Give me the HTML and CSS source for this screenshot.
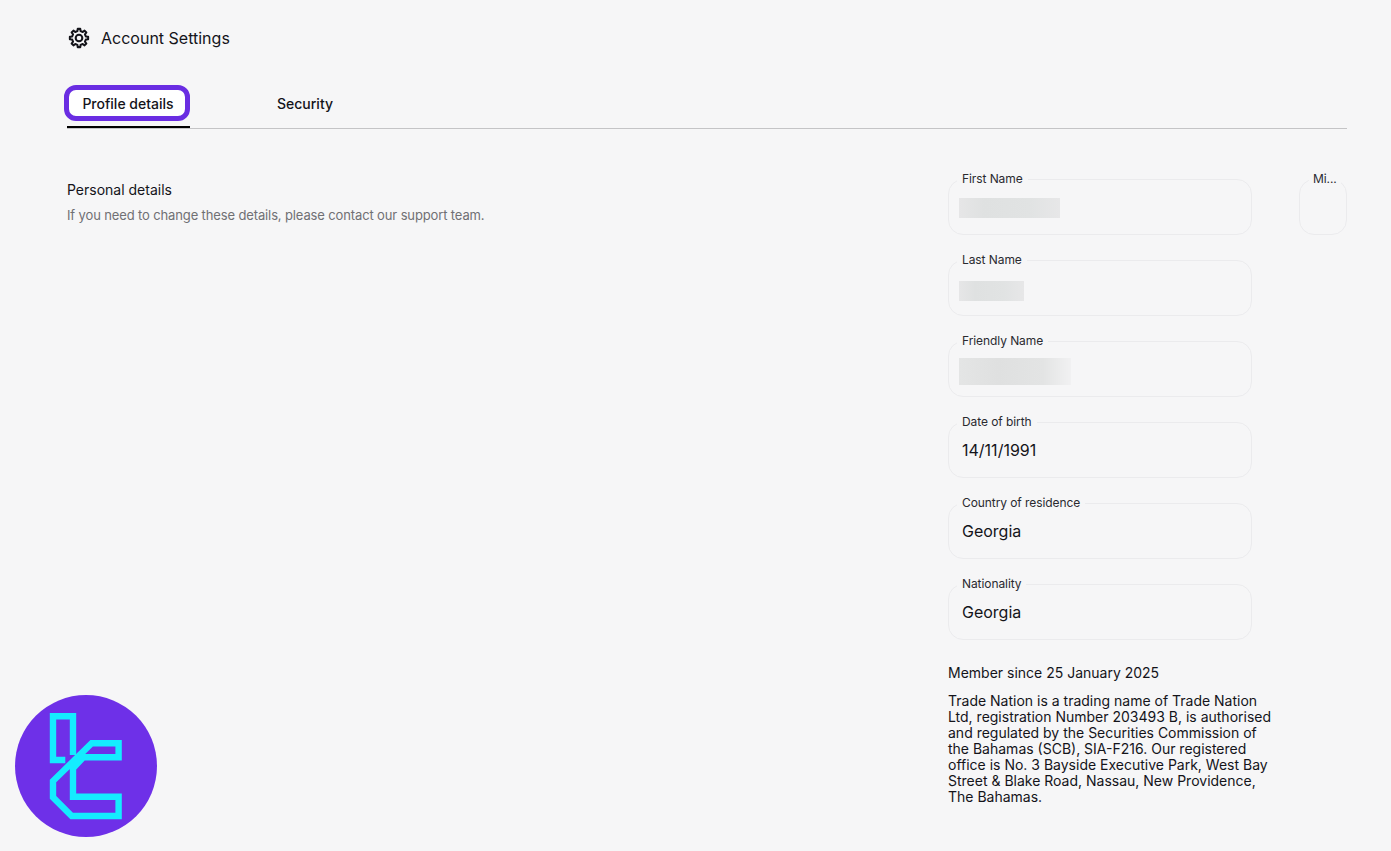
FILE: index.html
```html
<!DOCTYPE html>
<html lang="en">
<head>
<meta charset="utf-8">
<title>Account Settings</title>
<link rel="stylesheet" href="styles.css">
</head>
<body>
<main class="page">
  <header class="title-row">
    <svg class="gear" viewBox="-1 -1 26 26" width="24" height="24" fill="none" stroke="#14141a" stroke-width="2.2" stroke-linejoin="round">
      <path d="M10.61 2.1L13.39 2.1L13.71 4.6L16.03 5.56L18.02 4.01L19.99 5.98L18.44 7.97L19.4 10.29L21.9 10.61L21.9 13.39L19.4 13.71L18.44 16.03L19.99 18.02L18.02 19.99L16.03 18.44L13.71 19.4L13.39 21.9L10.61 21.9L10.29 19.4L7.97 18.44L5.98 19.99L4.01 18.02L5.56 16.03L4.6 13.71L2.1 13.39L2.1 10.61L4.6 10.29L5.56 7.97L4.01 5.98L5.98 4.01L7.97 5.56L10.29 4.6Z"/>
      <circle cx="12" cy="12" r="3.6"/>
    </svg>
    <h1 class="title">Account Settings</h1>
  </header>

  <nav class="tabs">
    <div class="tab-item">
      <button class="tab-pill" type="button">Profile details</button>
    </div>
    <button class="tab" type="button">Security</button>
  </nav>

  <section class="content">
    <div class="intro">
      <h2 class="intro-title">Personal details</h2>
      <p class="intro-text">If you need to change these details, please contact our support team.</p>
    </div>

    <div class="details">
      <div class="field-row">
        <fieldset class="field">
          <legend class="field-label">First Name</legend>
          <div class="redacted redacted-first"></div>
        </fieldset>
        <fieldset class="field field-small">
          <legend class="field-label">Mi...</legend>
        </fieldset>
      </div>
      <fieldset class="field">
        <legend class="field-label">Last Name</legend>
        <div class="redacted redacted-last"></div>
      </fieldset>
      <fieldset class="field">
        <legend class="field-label">Friendly Name</legend>
        <div class="redacted redacted-friendly"></div>
      </fieldset>
      <fieldset class="field">
        <legend class="field-label">Date of birth</legend>
        <div class="field-value">14/11/1991</div>
      </fieldset>
      <fieldset class="field">
        <legend class="field-label">Country of residence</legend>
        <div class="field-value">Georgia</div>
      </fieldset>
      <fieldset class="field">
        <legend class="field-label">Nationality</legend>
        <div class="field-value">Georgia</div>
      </fieldset>

      <p class="member">Member since 25 January 2025</p>
      <p class="legal">Trade Nation is a trading name of Trade Nation Ltd, registration Number 203493 B, is authorised and regulated by the Securities Commission of the Bahamas (SCB), SIA-F216. Our registered office is No. 3 Bayside Executive Park, West Bay Street &amp; Blake Road, Nassau, New Providence, The Bahamas.</p>
    </div>
  </section>
</main>

<svg class="logo" viewBox="0 0 142 142" width="142" height="142" fill="none" stroke="#14ecff" stroke-width="6.4">
  <circle cx="71" cy="71" r="71" fill="#6e30e8" stroke="none"/>
  <path d="M50.3 65H38V21.3H58V60"/>
  <path d="M103.6 62.3H68.3L58 73.3V101.7H103.6V121H56.7L38 102.3V86L76.7 48.3H103.6Z"/>
</svg>
</body>
</html>
```

FILE: styles.css
```css
* { box-sizing: border-box; }

html, body { height: 100%; }

body {
  margin: 0;
  background: #f6f6f7;
  color: #14141a;
  font-family: Inter, "Liberation Sans", sans-serif;
  overflow: hidden;
}

.page {
  padding: 26px 44px 0 67px;
}

.title-row {
  display: flex;
  align-items: center;
  gap: 10px;
  height: 24px;
}

.gear { flex: none; }

.title {
  margin: 0;
  font-size: 16px;
  font-weight: 400;
  line-height: 24px;
}

.tabs {
  display: flex;
  align-items: flex-start;
  height: 79px;
  padding-top: 35px;
  border-bottom: 1px solid #c4c4c6;
}

.tab-item {
  width: 123px;
  height: 43px;
  border-bottom: 2px solid #000;
}

.tab-pill {
  display: block;
  width: 126px;
  height: 36px;
  margin-left: -3px;
  padding: 1px 0 0 2px;
  border: 5px solid #6a2de2;
  border-radius: 12px;
  background: #fff;
  color: #14141a;
  font: 450 14px/20px Inter, "Liberation Sans", sans-serif;
  white-space: nowrap;
}

.tab {
  height: 36px;
  margin-left: 87px;
  padding: 2px 0 0;
  border: 0;
  background: none;
  color: #14141a;
  font: 450 14px/20px Inter, "Liberation Sans", sans-serif;
}

.content {
  display: flex;
  justify-content: space-between;
  padding-top: 42px;
}

.intro { padding-top: 10px; }

.intro-title {
  margin: 0;
  font-size: 14px;
  font-weight: 400;
  line-height: 17px;
}

.intro-text {
  margin: 9px 0 0;
  color: #707074;
  font-size: 13px;
  line-height: 16px;
  letter-spacing: -0.13px;
}

.details {
  display: flex;
  flex-direction: column;
  gap: 17px;
  width: 399px;
}

.field-row {
  display: flex;
  gap: 47px;
}

.field {
  width: 304px;
  height: 64px;
  min-width: 0;
  margin: 0;
  padding: 0 13px;
  border: 1px solid #ebebed;
  border-radius: 15px;
}

.field-small {
  width: 48px;
  padding: 0 9px;
}

.field-label {
  margin-left: -5px;
  padding: 0 5px;
  color: #2a2a30;
  font-size: 12px;
  line-height: 16px;
  letter-spacing: -0.08px;
  white-space: nowrap;
}

.field-small .field-label {
  margin-left: 0;
  padding: 0 4px;
}

.field-value {
  margin-top: 8px;
  font-size: 16px;
  line-height: 24px;
}

.redacted {
  height: 20px;
  margin-left: -3px;
  background: linear-gradient(90deg, #e6e6e7 0%, #dfe1e1 25%, #e1e3e3 70%, #e7e7e8 100%);
  filter: blur(0.6px);
}

.redacted-first { width: 101px; margin-top: 11px; }
.redacted-last { width: 65px; margin-top: 13px; }

.redacted-friendly {
  width: 112px;
  height: 27px;
  margin-top: 9px;
  background: linear-gradient(90deg, #e4e5e5 0%, #dfe0e0 35%, #e3e4e4 75%, #f1f1f2 100%);
}

.member {
  margin: 6px 0 -7px;
  font-size: 14px;
  line-height: 20px;
}

.legal {
  width: 326px;
  margin: 0;
  font-size: 14px;
  line-height: 16px;
}

.logo {
  position: fixed;
  left: 15px;
  top: 695px;
}
```
